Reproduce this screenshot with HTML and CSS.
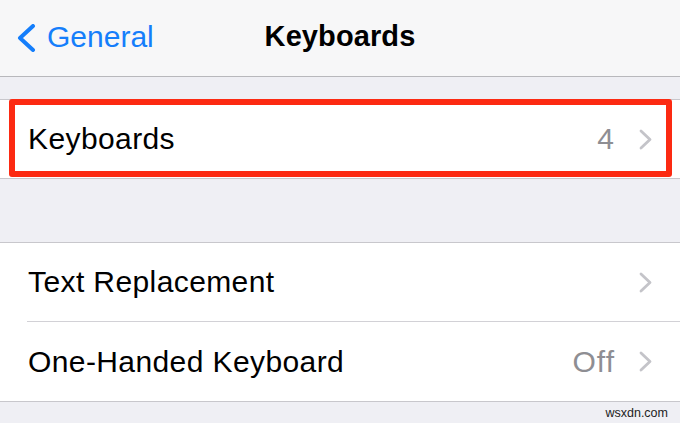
FILE: index.html
```html
<!DOCTYPE html>
<html lang="en">
<head>
<meta charset="utf-8">
<title>Keyboards</title>
<link rel="stylesheet" href="styles.css">
</head>
<body>
  <header class="nav">
    <div class="back">
      <svg class="back-chevron" width="22" height="28" viewBox="0 0 22 28"><path d="M18 2 L5 14 L18 26" fill="none" stroke="#157efb" stroke-width="4" stroke-linecap="round" stroke-linejoin="round"/></svg>
      <span class="back-label">General</span>
    </div>
    <h1 class="title">Keyboards</h1>
    <div class="spacer"></div>
  </header>

  <section class="group group-first">
    <div class="row">
      <span class="label">Keyboards</span>
      <span class="value">4</span>
      <svg class="chev" width="13" height="21" viewBox="0 0 13 21"><path d="M2 2 L11 10.5 L2 19" fill="none" stroke="#c4c4c9" stroke-width="2.8" stroke-linecap="round" stroke-linejoin="round"/></svg>
      <div class="highlight"></div>
    </div>
  </section>

  <section class="group group-second">
    <div class="row row-sep">
      <span class="label">Text Replacement</span>
      <svg class="chev" width="13" height="21" viewBox="0 0 13 21"><path d="M2 2 L11 10.5 L2 19" fill="none" stroke="#c4c4c9" stroke-width="2.8" stroke-linecap="round" stroke-linejoin="round"/></svg>
    </div>
    <div class="row row-last">
      <span class="label">One-Handed Keyboard</span>
      <span class="value">Off</span>
      <svg class="chev" width="13" height="21" viewBox="0 0 13 21"><path d="M2 2 L11 10.5 L2 19" fill="none" stroke="#c4c4c9" stroke-width="2.8" stroke-linecap="round" stroke-linejoin="round"/></svg>
    </div>
  </section>

  <footer class="foot">
    <span class="watermark">wsxdn.com</span>
  </footer>
</body>
</html>
```

FILE: styles.css
```css
html, body {
  margin: 0;
  padding: 0;
}
body {
  width: 680px;
  height: 423px;
  overflow: hidden;
  background: #efeff4;
  font-family: "Liberation Sans", Arial, sans-serif;
  color: #000;
}
.nav {
  height: 73px;
  padding-bottom: 3px;
  background: #f7f7f8;
  border-bottom: 1px solid #b8b8bc;
  display: grid;
  grid-template-columns: 1fr auto 1fr;
  align-items: center;
}
.back {
  display: flex;
  align-items: center;
  padding-left: 15px;
  gap: 10px;
  color: #157efb;
}
.back-chevron {
  display: block;
  margin-top: 2px;
}
.back-label {
  font-size: 30px;
}
.title {
  margin: 0;
  font-size: 29px;
  font-weight: bold;
  letter-spacing: 0.1px;
}
.group {
  background: #fff;
  border-top: 1px solid #c8c7cc;
  border-bottom: 1px solid #c8c7cc;
}
.group-first {
  margin-top: 22px;
}
.group-second {
  margin-top: 63px;
}
.row {
  position: relative;
  height: 78px;
  display: flex;
  align-items: center;
  padding: 0 28px;
  font-size: 30px;
  letter-spacing: 0.4px;
}
.row-last {
  height: 79px;
}
.row-sep {
  margin-bottom: 1px;
}
.row-sep::after {
  content: "";
  position: absolute;
  left: 27px;
  right: 0;
  bottom: -1px;
  height: 1px;
  background: #d2d1d6;
}
.label {
  flex: 1;
}
.value {
  color: #8e8e93;
  margin-right: 24px;
  letter-spacing: 1px;
}
.chev {
  display: block;
}
.highlight {
  position: absolute;
  left: 9px;
  top: -1px;
  width: 651px;
  height: 66px;
  border: 6px solid #fc2a12;
  border-radius: 3px;
}
.foot {
  display: flex;
  justify-content: flex-end;
  padding: 4px 12px 0 0;
}
.watermark {
  font-size: 12.5px;
  color: #222;
  letter-spacing: 0;
}
```
